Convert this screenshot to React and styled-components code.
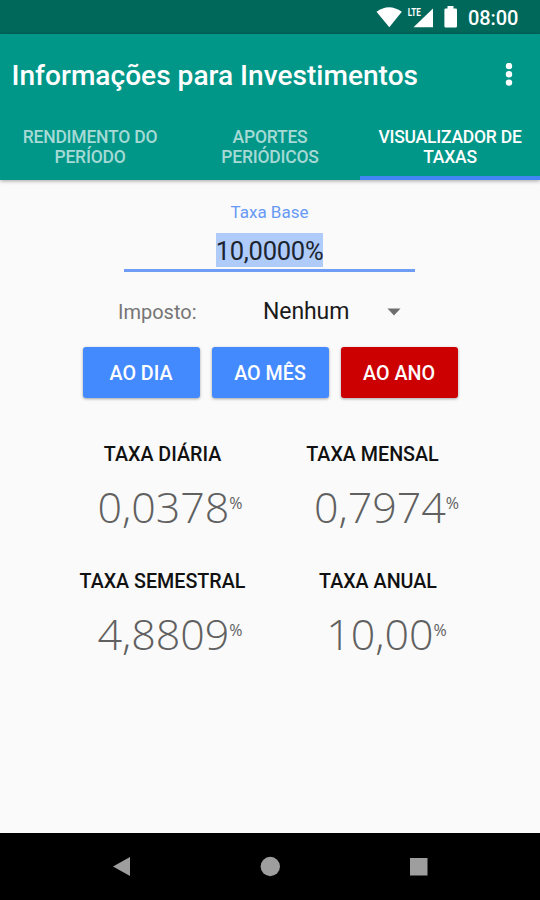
import React from "react";
import styled, { createGlobalStyle } from "styled-components";

const GlobalStyle = createGlobalStyle`
  body {
    margin: 0;
    background: #fafafa;
    font-family: Roboto, sans-serif;
  }
  * {
    box-sizing: border-box;
  }
`;

const Screen = styled.div`
  display: flex;
  flex-direction: column;
  width: 540px;
  height: 900px;
  background: #fafafa;
  overflow: hidden;
`;

const StatusBar = styled.div`
  display: flex;
  flex-shrink: 0;
  height: 34px;
  background: #00685a;
`;

const StatusIcons = styled.svg`
  display: block;
  margin-left: 370px;
  flex-shrink: 0;
`;

const Clock = styled.span`
  margin-left: 7px;
  line-height: 37px;
  font-size: 20px;
  font-weight: 500;
  letter-spacing: -0.1px;
  color: #fff;
`;

const Header = styled.header`
  flex-shrink: 0;
  height: 146px;
  background: #009688;
  box-shadow: 0 1px 4px rgba(0, 0, 0, 0.35);
`;

const Toolbar = styled.div`
  display: flex;
  align-items: center;
  justify-content: space-between;
  height: 80px;
  padding: 3px 26px 0 11.5px;
`;

const Title = styled.h1`
  margin: 0;
  font-size: 28.1px;
  font-weight: 500;
  white-space: nowrap;
  color: #fff;
`;

const Tabs = styled.nav`
  display: flex;
  height: 66px;
`;

const Tab = styled.div`
  flex: 1;
  padding-top: 14px;
  border-bottom: 4px solid ${(props) => (props.$active ? "#4285f4" : "transparent")};
  font-size: 17.5px;
  font-weight: 500;
  line-height: 19.5px;
  letter-spacing: -0.22px;
  text-align: center;
  white-space: pre-line;
  color: ${(props) => (props.$active ? "#fff" : "#a6dad5")};
`;

const Content = styled.main`
  flex: 1;
  display: flex;
  flex-direction: column;
  align-items: center;
`;

const Field = styled.div`
  display: flex;
  flex-direction: column;
  align-items: center;
  width: 291px;
  height: 92px;
  margin-right: 1px;
  padding-top: 22px;
  border-bottom: 3px solid #6f9cf4;
`;

const FieldLabel = styled.label`
  font-size: 17px;
  line-height: 21px;
  color: #6799f5;
`;

const FieldValue = styled.span`
  margin-top: 10px;
  height: 34px;
  line-height: 37px;
  font-size: 25.5px;
  letter-spacing: -0.25px;
  background: #aecbfa;
  color: #1c2430;
`;

const TaxRow = styled.div`
  display: flex;
  align-items: center;
  width: 304px;
  height: 75px;
  padding-top: 4px;
`;

const TaxLabel = styled.span`
  width: 145px;
  font-size: 20px;
  color: #757575;
`;

const TaxSelect = styled.div`
  flex: 1;
  display: flex;
  align-items: center;
  justify-content: space-between;
  padding-right: 21px;
  font-size: 23px;
  letter-spacing: -0.1px;
  color: #1a1a1a;
`;

const Buttons = styled.div`
  display: flex;
  gap: 12px;
`;

const Button = styled.button`
  width: 117px;
  height: 51px;
  padding: 2px 0 0;
  border: 0;
  border-radius: 3px;
  background: ${(props) => (props.$selected ? "#cc0000" : "#448aff")};
  box-shadow: 0 1px 3px rgba(0, 0, 0, 0.35);
  font-family: inherit;
  font-size: 19.7px;
  font-weight: 500;
  color: #fff;
`;

const Rates = styled.section`
  display: grid;
  grid-template-columns: 200px 233px;
  grid-auto-rows: 127px;
  margin-top: 44px;
  padding-left: 33px;
`;

const Rate = styled.div`
  display: flex;
  flex-direction: column;
  align-items: center;
`;

const RateName = styled.h2`
  margin: 0;
  padding-right: ${(props) => props.$inset}px;
  font-size: 19.7px;
  font-weight: 500;
  line-height: 25px;
  white-space: nowrap;
  color: #111;
`;

const RateValue = styled.div`
  display: flex;
  margin-top: 14px;
  font-family: "Open Sans", sans-serif;
  font-size: 43px;
  font-weight: 300;
  line-height: 52px;
  color: #606060;
`;

const Percent = styled.span`
  font-size: 16px;
  font-weight: 400;
  line-height: 44px;
`;

const NavBar = styled.footer`
  flex-shrink: 0;
  height: 67px;
  background: #000;
`;

const tabs = [
  { label: "RENDIMENTO DO\nPERÍODO" },
  { label: "APORTES\nPERIÓDICOS" },
  { label: "VISUALIZADOR DE\nTAXAS", active: true },
];

const rates = [
  { name: "TAXA DIÁRIA", value: "0,0378", inset: 15 },
  { name: "TAXA MENSAL", value: "0,7974", inset: 28 },
  { name: "TAXA SEMESTRAL", value: "4,8809", inset: 15 },
  { name: "TAXA ANUAL", value: "10,00", inset: 17 },
];

const App = () => {
  return (
    <>
      <GlobalStyle />
      <Screen>
        <StatusBar>
          <StatusIcons width="91" height="34" fill="#fff">
            <path d="M6.5 11.8Q19 2.8 31.8 11.8L19.3 27.2Z" />
            <text x="37.8" y="16" fontSize="11" fontWeight="700" fontFamily="Roboto" textLength="13" lengthAdjust="spacingAndGlyphs">LTE</text>
            <path d="M63 8.5V27.3H43.5Z" />
            <path d="M77.5 6h6v2.5h2.2q1.3 0 1.3 1.3v16.4q0 1.3-1.3 1.3h-10q-1.3 0-1.3-1.3V9.8q0-1.3 1.3-1.3h1.8Z" />
          </StatusIcons>
          <Clock>08:00</Clock>
        </StatusBar>
        <Header>
          <Toolbar>
            <Title>Informações para Investimentos</Title>
            <svg width="10" height="26" fill="#fff">
              <circle cx="5" cy="3" r="3.2" />
              <circle cx="5" cy="11.3" r="3.2" />
              <circle cx="5" cy="19.6" r="3.2" />
            </svg>
          </Toolbar>
          <Tabs>
            {tabs.map((tab) => (
              <Tab key={tab.label} $active={tab.active}>
                {tab.label}
              </Tab>
            ))}
          </Tabs>
        </Header>
        <Content>
          <Field>
            <FieldLabel>Taxa Base</FieldLabel>
            <FieldValue>10,0000%</FieldValue>
          </Field>
          <TaxRow>
            <TaxLabel>Imposto:</TaxLabel>
            <TaxSelect>
              Nenhum
              <svg width="14" height="8" fill="#6e6e6e">
                <path d="M0.5 0.5H13.5L7 7.5Z" />
              </svg>
            </TaxSelect>
          </TaxRow>
          <Buttons>
            <Button>AO DIA</Button>
            <Button>AO MÊS</Button>
            <Button $selected>AO ANO</Button>
          </Buttons>
          <Rates>
            {rates.map((rate) => (
              <Rate key={rate.name}>
                <RateName $inset={rate.inset}>{rate.name}</RateName>
                <RateValue>
                  {rate.value}
                  <Percent>%</Percent>
                </RateValue>
              </Rate>
            ))}
          </Rates>
        </Content>
        <NavBar>
          <svg width="540" height="67" fill="#9e9e9e">
            <path d="M113 33.5L130 24V43Z" />
            <circle cx="270.3" cy="33.5" r="9.7" />
            <rect x="410" y="25" width="17.5" height="17.5" />
          </svg>
        </NavBar>
      </Screen>
    </>
  );
};

export default App;
